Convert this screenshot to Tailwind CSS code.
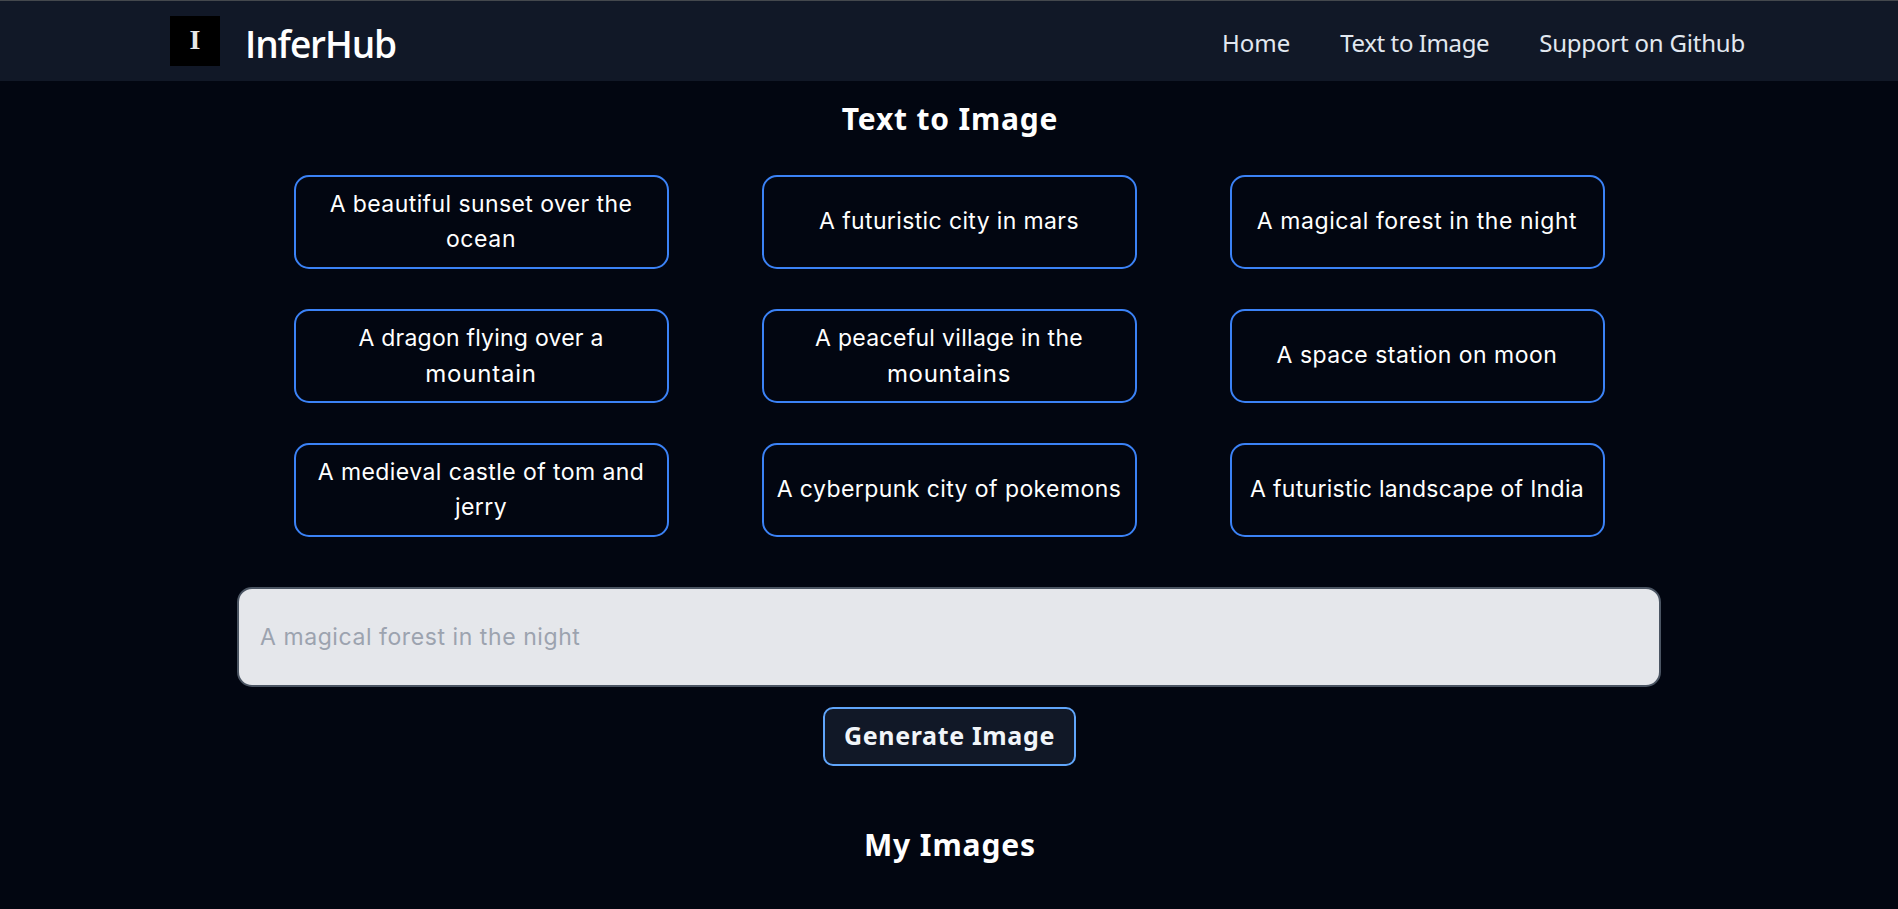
<!DOCTYPE html>
<html lang="en">
<head>
<meta charset="utf-8">
<title>InferHub</title>
<script src="https://cdn.jsdelivr.net/npm/@tailwindcss/browser@4"></script>
</head>
<body class="h-[909px] overflow-hidden bg-[#020611] font-['Inter',sans-serif] text-white">
<header class="flex h-[81px] items-center justify-between border-t border-[#44484d] bg-[#111827] pl-[170px] pr-[153px]">
  <div class="flex items-center">
    <div class="flex size-[50px] items-center justify-center bg-black pb-[2px] font-['Liberation_Serif',serif] text-[28px] leading-none font-bold text-[#e8e8e8]">I</div>
    <h1 class="ml-[25px] pt-[4px] font-['Open_Sans',sans-serif] text-[37px] leading-[45px] font-semibold tracking-[-1.1px]">InferHub</h1>
  </div>
  <nav class="flex gap-[50px] pt-[2px] font-['Noto_Sans',sans-serif] text-[24px] leading-[35px] whitespace-nowrap text-[#e2e8f0]">
    <a>Home</a>
    <a class="tracking-[-0.4px]">Text to Image</a>
    <a class="tracking-[-0.2px]">Support on Github</a>
  </nav>
</header>
<main class="flex flex-col items-center">
  <h2 class="mt-[18px] ml-[2px] font-['Noto_Sans',sans-serif] text-[30px] leading-[40px] font-bold tracking-[0.8px]">Text to Image</h2>
  <section class="mt-[36px] grid grid-cols-[375px_375px_375px] gap-x-[93px] gap-y-[40px] text-center text-[23px] leading-[35px] whitespace-nowrap">
    <div class="flex h-[94px] flex-col items-center justify-center rounded-[15px] border-2 border-[#3b82f6]"><span class="tracking-[0.41px]">A beautiful sunset over the</span><span class="tracking-[0.63px]">ocean</span></div>
    <div class="flex h-[94px] flex-col items-center justify-center rounded-[15px] border-2 border-[#3b82f6] pb-px"><span class="tracking-[0.37px]">A futuristic city in mars</span></div>
    <div class="flex h-[94px] flex-col items-center justify-center rounded-[15px] border-2 border-[#3b82f6] pb-px"><span class="tracking-[0.57px]">A magical forest in the night</span></div>
    <div class="flex h-[94px] flex-col items-center justify-center rounded-[15px] border-2 border-[#3b82f6]"><span class="tracking-[0.23px]">A dragon flying over a</span><span class="text-[24px] tracking-[0.8px]">mountain</span></div>
    <div class="flex h-[94px] flex-col items-center justify-center rounded-[15px] border-2 border-[#3b82f6]"><span class="tracking-[0.31px]">A peaceful village in the</span><span class="text-[24px] tracking-[0.7px]">mountains</span></div>
    <div class="flex h-[94px] flex-col items-center justify-center rounded-[15px] border-2 border-[#3b82f6] pb-px"><span class="tracking-[0.49px]">A space station on moon</span></div>
    <div class="flex h-[94px] flex-col items-center justify-center rounded-[15px] border-2 border-[#3b82f6]"><span class="tracking-[0.42px]">A medieval castle of tom and</span><span class="tracking-[0.42px]">jerry</span></div>
    <div class="flex h-[94px] flex-col items-center justify-center rounded-[15px] border-2 border-[#3b82f6] pb-px"><span class="tracking-[0.42px]">A cyberpunk city of pokemons</span></div>
    <div class="flex h-[94px] flex-col items-center justify-center rounded-[15px] border-2 border-[#3b82f6] pb-px"><span class="tracking-[0.3px]">A futuristic landscape of India</span></div>
  </section>
  <input type="text" placeholder="A magical forest in the night" class="mt-[50px] h-[100px] w-[1424px] rounded-[15px] border-2 border-[#4b5563] bg-[#e5e7eb] px-[21px] text-[23px] tracking-[0.57px] text-[#111827] placeholder:text-[#9ca3af]">
  <button class="mt-[20px] h-[59px] w-[253px] rounded-[10px] border-2 border-[#60a5fa] bg-[#111827] pt-[9px] pb-[11px] pl-px font-['Noto_Sans',sans-serif] text-[25px] leading-[35px] font-bold tracking-[0.65px] whitespace-nowrap text-[#f1f5f9]">Generate Image</button>
  <h2 class="mt-[59px] ml-[2px] font-['Noto_Sans',sans-serif] text-[30px] leading-[40px] font-bold tracking-[0.9px]">My Images</h2>
</main>
</body>
</html>
